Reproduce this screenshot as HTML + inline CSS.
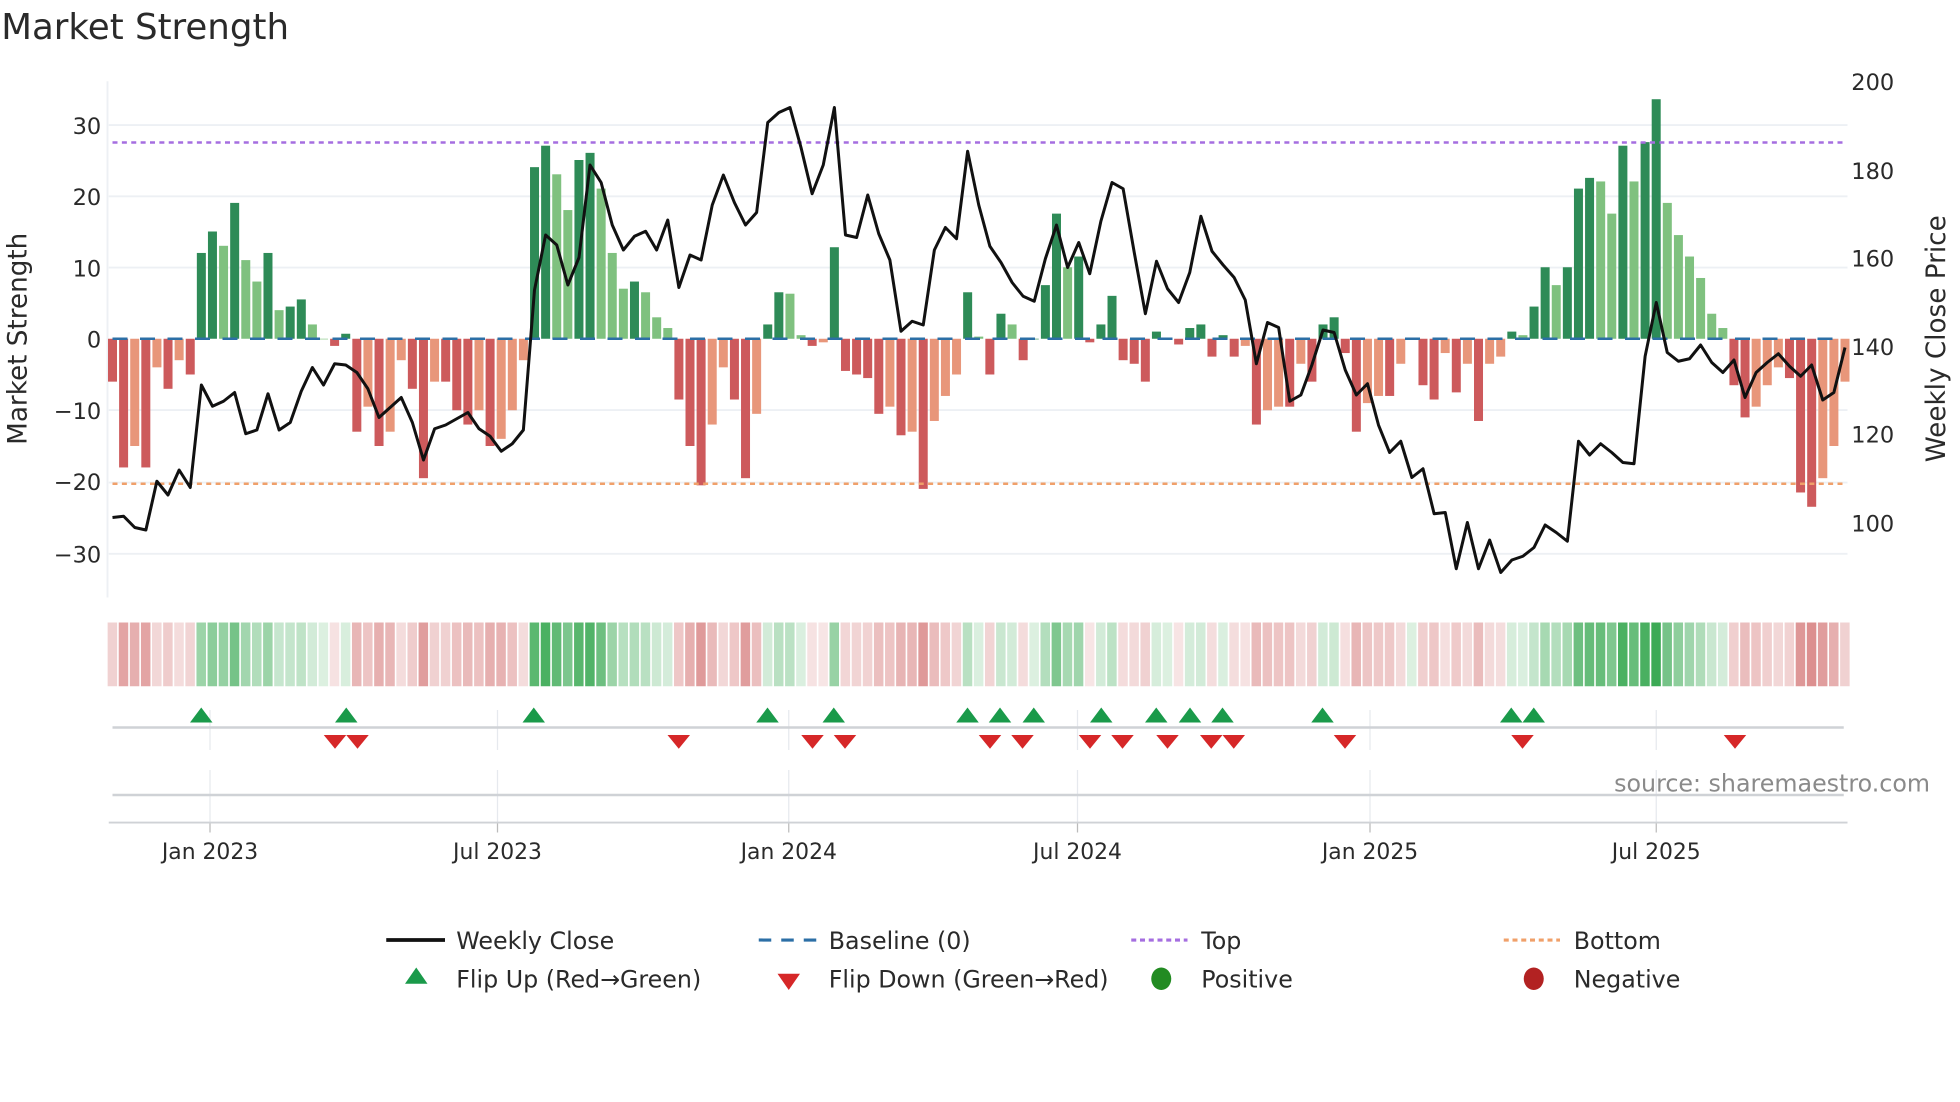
<!DOCTYPE html>
<html><head><meta charset="utf-8"><style>
html,body{margin:0;padding:0;background:#fff;}
svg{display:block;font-family:"DejaVu Sans","Liberation Sans",sans-serif;}
</style></head><body>
<svg id="s" width="1960" height="1102" viewBox="0 0 1568 881.6" xmlns="http://www.w3.org/2000/svg">
<rect width="1568" height="882" fill="#fff"/>
<text x="1" y="31" font-size="28.5" fill="#2a2a2a">Market Strength</text>
<g id="grid"></g>
<g id="bars"></g>
<g id="heat"></g>
<g id="lines"></g>
<g id="marks"></g>
<g fill="#2a2a2a" font-size="18">
<text x="81" y="107" text-anchor="end">30</text>
<text x="81" y="164" text-anchor="end">20</text>
<text x="81" y="221" text-anchor="end">10</text>
<text x="81" y="278" text-anchor="end">0</text>
<text x="81" y="335" text-anchor="end">−10</text>
<text x="81" y="392" text-anchor="end">−20</text>
<text x="81" y="450" text-anchor="end">−30</text>
<text x="1481" y="72">200</text>
<text x="1481" y="143">180</text>
<text x="1481" y="213">160</text>
<text x="1481" y="284">140</text>
<text x="1481" y="354">120</text>
<text x="1481" y="425">100</text>
<text transform="translate(21,271) rotate(-90)" text-anchor="middle" font-size="21">Market Strength</text>
<text transform="translate(1556,271) rotate(-90)" text-anchor="middle" font-size="21">Weekly Close Price</text>
<g font-size="17.5" text-anchor="middle">
<text x="168" y="687">Jan 2023</text><text x="398" y="687">Jul 2023</text><text x="631" y="687">Jan 2024</text>
<text x="862" y="687">Jul 2024</text><text x="1096" y="687">Jan 2025</text><text x="1325" y="687">Jul 2025</text>
</g>
<text x="1544" y="633" text-anchor="end" fill="#8a8a8a" font-size="19">source: sharemaestro.com</text>
</g>
<g font-size="19" fill="#2a2a2a">
<line x1="309" y1="752" x2="356" y2="752" stroke="#111" stroke-width="3"/>
<text x="365" y="759">Weekly Close</text>
<line x1="607" y1="752" x2="654" y2="752" stroke="#2c6fa6" stroke-width="2.5" stroke-dasharray="10,8"/>
<text x="663" y="759">Baseline (0)</text>
<line x1="905" y1="752" x2="950" y2="752" stroke="#a56ee0" stroke-width="2.5" stroke-dasharray="4,3"/>
<text x="961" y="759">Top</text>
<line x1="1203" y1="752" x2="1248" y2="752" stroke="#f0a06a" stroke-width="2.5" stroke-dasharray="4,3"/>
<text x="1259" y="759">Bottom</text>
<polygon points="333,774 342,787 324,787" fill="#1a9a4a"/>
<text x="365" y="790">Flip Up (Red→Green)</text>
<polygon points="622,779 640,779 631,792" fill="#d62728"/>
<text x="663" y="790">Flip Down (Green→Red)</text>
<ellipse cx="929" cy="783" rx="8" ry="9" fill="#228b22"/>
<text x="961" y="790">Positive</text>
<ellipse cx="1227" cy="783" rx="8" ry="9" fill="#b22222"/>
<text x="1259" y="790">Negative</text>
</g>
</svg>
<script>
var NS="http://www.w3.org/2000/svg";
function el(p,t,a){var e=document.createElementNS(NS,t);for(var k in a)e.setAttribute(k,a[k]);document.getElementById(p).appendChild(e);return e;}
var v=[-6,-18,-15,-18,-4,-7,-3,-5,12,15,13,19,11,8,12,4,4.5,5.5,2,0,-1,0.7,-13,-9.5,-15,-13,-3,-7,-19.5,-6,-6,-10,-12,-10,-15,-14,-10,-3,24,27,23,18,25,26,21,12,7,8,6.5,3,1.5,-8.5,-15,-20.5,-12,-4,-8.5,-19.5,-10.5,2,6.5,6.3,0.5,-1,-0.5,12.8,-4.5,-5,-5.5,-10.5,-9.5,-13.5,-13,-21,-11.5,-8,-5,6.5,0.3,-5,3.5,2,-3,0,7.5,17.5,10,11.5,-0.5,2,6,-3,-3.5,-6,1,0,-0.8,1.5,2,-2.5,0.5,-2.5,-1,-12,-10,-9.5,-9.5,-3.5,-6,2,3,-2,-13,-9,-8,-8,-3.5,0,-6.5,-8.5,-2,-7.5,-3.5,-11.5,-3.5,-2.5,1,0.5,4.5,10,7.5,10,21,22.5,22,17.5,27,22,27.5,33.5,19,14.5,11.5,8.5,3.5,1.5,-6.5,-11,-9.5,-6.5,-4,-5.5,-21.5,-23.5,-19.5,-15,-6];
var n=v.length,x0=90,dx=(1476-90)/(n-1),z=271,u=5.72;
[100,157,214,328,386,443].forEach(function(y){el("grid","line",{x1:87,x2:1478,y1:y,y2:y,stroke:"#edf0f4","stroke-width":1.5});});
el("grid","line",{x1:86,x2:86,y1:65,y2:478,stroke:"#edf0f4","stroke-width":1.5});
[168,398,631,862,1096,1325].forEach(function(x){el("grid","line",{x1:x,x2:x,y1:568,y2:600,stroke:"#e6e9ee","stroke-width":1});el("grid","line",{x1:x,x2:x,y1:616,y2:658,stroke:"#e6e9ee","stroke-width":1});el("grid","line",{x1:x,x2:x,y1:658,y2:666,stroke:"#bbb","stroke-width":1});});
el("grid","line",{x1:90,x2:1475,y1:582,y2:582,stroke:"#cfd2d6","stroke-width":2});
el("grid","line",{x1:90,x2:1475,y1:636,y2:636,stroke:"#cfd2d6","stroke-width":2});
el("grid","line",{x1:87,x2:1478,y1:658,y2:658,stroke:"#cfd2d6","stroke-width":1.5});
for(var i=0;i<n;i++){var x=x0+i*dx,val=v[i],p=i?v[i-1]:0,c;
 if(val>=0)c=(val>=p)?"#2e8b57":"#7fc17f";else c=(val<=p)?"#cd5a5c":"#e8967a";
 var h=Math.abs(val)*u,y=val>=0?z-h:z;el("bars","rect",{x:x-3.6,y:y,width:7.2,height:Math.max(h,0.5),fill:c});
 var a=Math.min(1,0.18+Math.abs(val)/30*0.82);
 var hc=val>=0?"rgba(60,170,85,"+a.toFixed(2)+")":"rgba(205,95,95,"+(a*0.85).toFixed(2)+")";
 el("heat","rect",{x:x-3.9,y:498,width:7.6,height:51,fill:hc});}
el("lines","line",{x1:90,x2:1476,y1:271,y2:271,stroke:"#2c6fa6","stroke-width":2,"stroke-dasharray":"12,10"});
el("lines","line",{x1:90,x2:1476,y1:114,y2:114,stroke:"#a56ee0","stroke-width":2,"stroke-dasharray":"4,3.5"});
el("lines","line",{x1:90,x2:1476,y1:387,y2:387,stroke:"#f0a06a","stroke-width":2,"stroke-dasharray":"4,3.5"});
var py=[414,413,422,424,385,396,376,390,308,325,321,314,347,344,315,344,338,313,294,308,291,292,298,311,334,326,318,338,368,343,340,335,330,343,349,361,355,344,232,188,196,228,206,132,146,180,200,189,185,200,176,230,204,208,164,140,162,180,170,98,90,86,118,155,132,86,188,190,156,187,208,265,257,260,200,182,191,121,164,197,210,226,237,241,207,180,214,194,219,177,146,151,202,251,209,231,242,218,173,201,212,222,240,291,258,262,321,316,292,264,266,296,316,307,340,362,353,382,375,411,410,455,418,455,432,458,448,445,438,420,426,433,353,364,355,362,370,371,285,242,282,289,287,276,290,298,288,318,298,290,283,293,301,292,320,314,278];
var pts=[];for(var i=0;i<py.length;i++)pts.push((x0+i*(1386/(py.length-1))).toFixed(1)+","+py[i]);
el("lines","polyline",{points:pts.join(" "),fill:"none",stroke:"#111","stroke-width":2.4,"stroke-linejoin":"round"});
[161,277,427,614,667,774,800,827,881,925,952,978,1058,1209,1227].forEach(function(x){el("marks","polygon",{points:(x)+",566 "+(x+9)+",578 "+(x-9)+",578",fill:"#1a9a4a"});});
[268,286,543,650,676,792,818,872,898,934,969,987,1076,1218,1388].forEach(function(x){el("marks","polygon",{points:(x-9)+",588 "+(x+9)+",588 "+x+",599",fill:"#d62728"});});
</script>
</body></html>
